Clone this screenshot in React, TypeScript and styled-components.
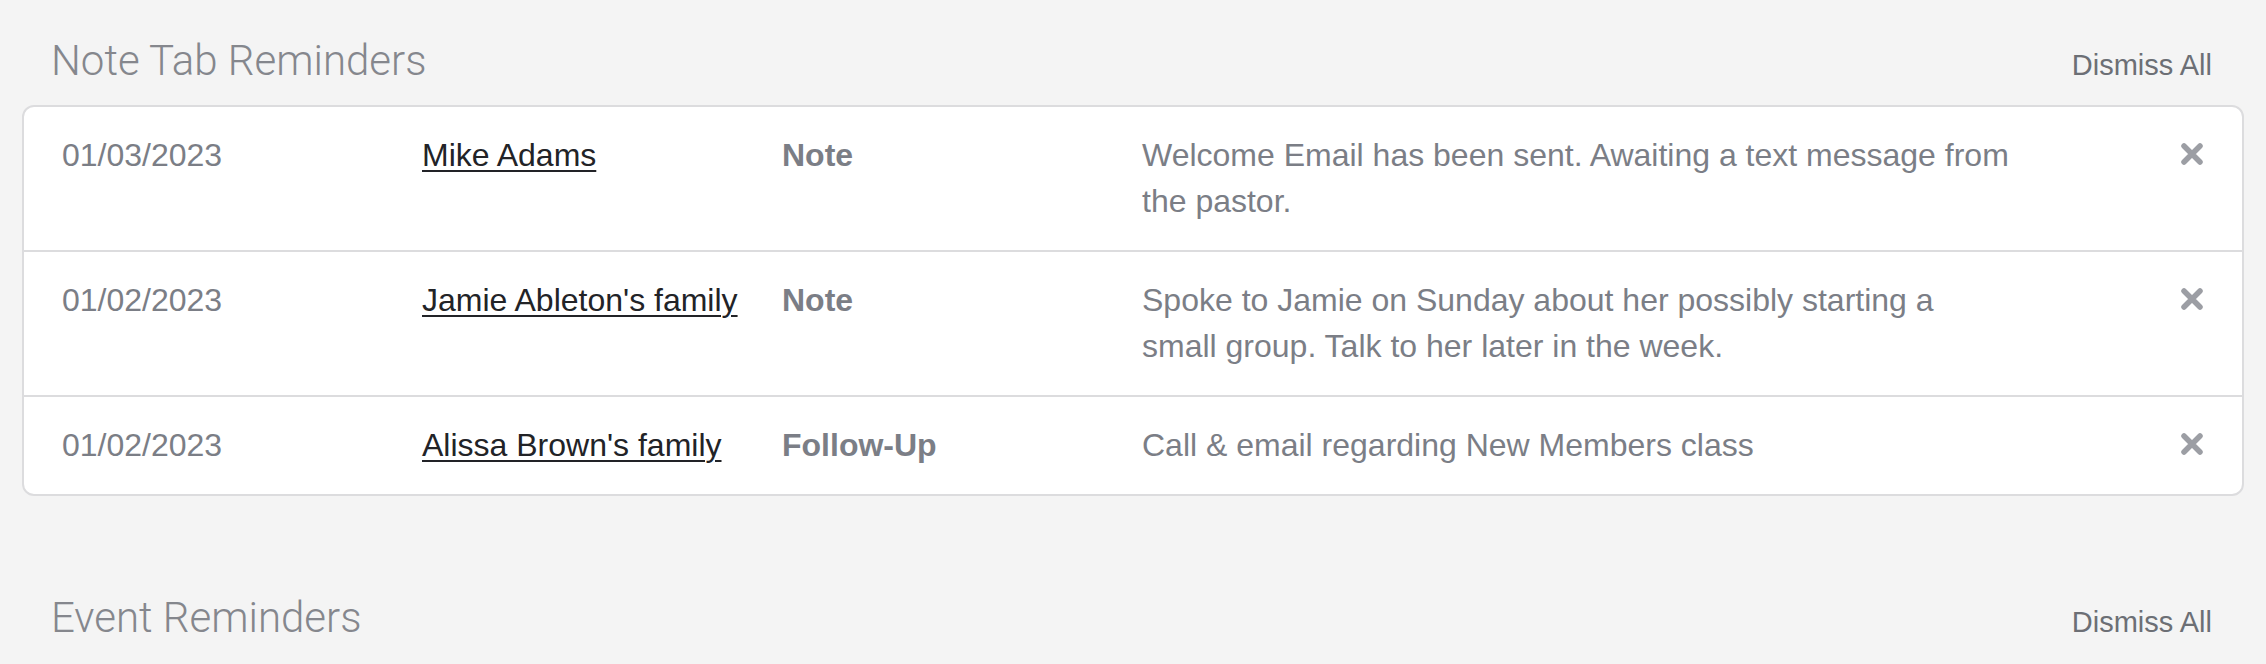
import React from 'react';
import styled, { createGlobalStyle } from 'styled-components';

const GlobalStyle = createGlobalStyle`
  html, body {
    margin: 0;
    padding: 0;
    background: #f4f4f4;
  }
  body {
    font-family: "Liberation Sans", Arial, sans-serif;
  }
`;

const Page = styled.div`
  padding: 37px 22px 0;
  display: flex;
  flex-direction: column;
  gap: 98px;
`;

const Section = styled.section`
  display: flex;
  flex-direction: column;
  gap: 20px;
`;

const SectionHeader = styled.div`
  display: flex;
  align-items: baseline;
  justify-content: space-between;
  padding: 0 32px 0 29px;
`;

const SectionTitle = styled.h2`
  margin: 0;
  font-family: "Roboto", "Liberation Sans", sans-serif;
  font-weight: 300;
  font-size: 42px;
  line-height: 48px;
  color: #85878d;
`;

const DismissAll = styled.button`
  border: none;
  background: none;
  padding: 0;
  font-family: "Liberation Sans", Arial, sans-serif;
  font-size: 29px;
  color: #6c6f75;
  cursor: pointer;
`;

const Card = styled.div`
  background: #ffffff;
  border: 2px solid #dcdcde;
  border-radius: 12px;
  overflow: hidden;
`;

const Row = styled.div`
  display: grid;
  grid-template-columns: 360px 360px 360px 872px 1fr;
  align-items: start;
  padding: 25px 38px 26px 38px;
  font-size: 32px;
  line-height: 46px;
  color: #7b7e86;

  & + & {
    border-top: 2px solid #dcdcde;
  }
`;

const DateCell = styled.div``;

const NameLink = styled.a`
  color: #222327;
  text-decoration: underline;
  text-decoration-thickness: 2px;
  text-underline-offset: 4px;
  justify-self: start;
`;

const TypeCell = styled.div`
  font-weight: 700;
`;

const Message = styled.div``;

const CloseButton = styled.button`
  justify-self: end;
  border: none;
  background: none;
  padding: 0;
  margin-top: 10px;
  width: 24px;
  height: 24px;
  display: flex;
  cursor: pointer;
`;

const XIcon = () => (
  <svg width="24" height="24" viewBox="0 0 24 24" fill="none">
    <path d="M4 4 L20 20 M20 4 L4 20" stroke="#9c9ea4" strokeWidth="5.5" strokeLinecap="round" />
  </svg>
);

type Reminder = { date: string; name: string; type: string; message: string };

const noteReminders: Reminder[] = [
  {
    date: '01/03/2023',
    name: 'Mike Adams',
    type: 'Note',
    message: 'Welcome Email has been sent. Awaiting a text message from the pastor.',
  },
  {
    date: '01/02/2023',
    name: "Jamie Ableton's family",
    type: 'Note',
    message: 'Spoke to Jamie on Sunday about her possibly starting a small group. Talk to her later in the week.',
  },
  {
    date: '01/02/2023',
    name: "Alissa Brown's family",
    type: 'Follow-Up',
    message: 'Call & email regarding New Members class',
  },
];

const ReminderRow: React.FC<{ item: Reminder }> = ({ item }) => (
  <Row>
    <DateCell>{item.date}</DateCell>
    <NameLink href="#">{item.name}</NameLink>
    <TypeCell>{item.type}</TypeCell>
    <Message>{item.message}</Message>
    <CloseButton aria-label="Dismiss">
      <XIcon />
    </CloseButton>
  </Row>
);

export default function App() {
  return (
    <>
      <GlobalStyle />
      <Page>
        <Section>
          <SectionHeader>
            <SectionTitle>Note Tab Reminders</SectionTitle>
            <DismissAll>Dismiss All</DismissAll>
          </SectionHeader>
          <Card>
            {noteReminders.map((r, i) => (
              <ReminderRow key={i} item={r} />
            ))}
          </Card>
        </Section>
        <Section>
          <SectionHeader>
            <SectionTitle>Event Reminders</SectionTitle>
            <DismissAll>Dismiss All</DismissAll>
          </SectionHeader>
        </Section>
      </Page>
    </>
  );
}
